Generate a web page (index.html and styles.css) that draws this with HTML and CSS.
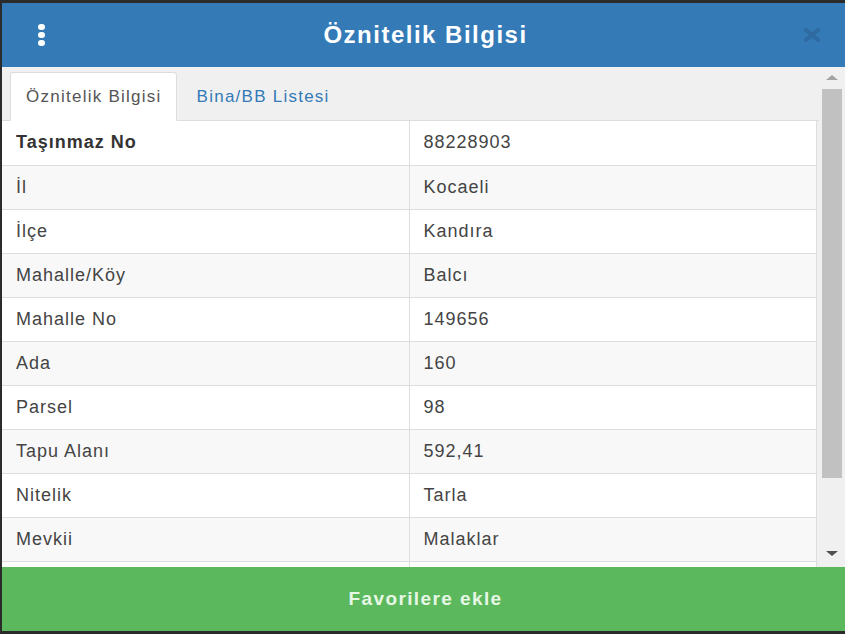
FILE: index.html
```html
<!DOCTYPE html>
<html lang="tr">
<head>
<meta charset="utf-8">
<title>Öznitelik Bilgisi</title>
<link rel="stylesheet" href="styles.css">
</head>
<body>
<div class="modal">
  <header class="modal-header">
    <span class="menu-dots"><i></i><i></i><i></i></span>
    <h1 class="title">Öznitelik Bilgisi</h1>
    <svg class="close" width="18" height="14" viewBox="0 0 18 14"><path d="M3 2 L15 12 M15 2 L3 12" stroke="#2f6aa0" stroke-width="4" stroke-linecap="round"/></svg>
  </header>
  <div class="modal-body">
    <div class="content">
      <ul class="tabs">
        <li class="tab active">Öznitelik Bilgisi</li>
        <li class="tab">Bina/BB Listesi</li>
      </ul>
      <table class="attr-table">
        <tr><td class="key strong">Taşınmaz No</td><td>88228903</td></tr>
        <tr><td class="key">İl</td><td>Kocaeli</td></tr>
        <tr><td class="key">İlçe</td><td>Kandıra</td></tr>
        <tr><td class="key">Mahalle/Köy</td><td>Balcı</td></tr>
        <tr><td class="key">Mahalle No</td><td>149656</td></tr>
        <tr><td class="key">Ada</td><td>160</td></tr>
        <tr><td class="key">Parsel</td><td>98</td></tr>
        <tr><td class="key">Tapu Alanı</td><td>592,41</td></tr>
        <tr><td class="key">Nitelik</td><td>Tarla</td></tr>
        <tr><td class="key">Mevkii</td><td>Malaklar</td></tr>
        <tr><td class="key"></td><td></td></tr>
      </table>
    </div>
    <div class="scrollbar">
      <span class="arrow up"></span>
      <span class="thumb"></span>
      <span class="arrow down"></span>
    </div>
  </div>
  <footer class="modal-footer">Favorilere ekle</footer>
</div>
</body>
</html>
```
FILE: styles.css
```css
html, body {
  margin: 0;
  padding: 0;
}
body {
  background: #2b2b2b;
  font-family: "Liberation Sans", Arial, sans-serif;
  width: 845px;
  height: 634px;
  overflow: hidden;
}
.modal {
  margin: 3px 0 0 2px;
  width: 843px;
  height: 628px;
  display: flex;
  flex-direction: column;
  background: #f0f0f0;
}
.modal-header {
  height: 64px;
  flex: none;
  background: #337ab7;
  display: flex;
  align-items: center;
  padding: 0 24px 0 36px;
  box-sizing: border-box;
}
.menu-dots {
  display: flex;
  flex-direction: column;
  gap: 2px;
  width: 8px;
}
.menu-dots i {
  display: block;
  width: 7px;
  height: 6px;
  border-radius: 3px;
  background: #fff;
}
.title {
  flex: 1;
  margin: 0;
  text-align: center;
  color: #fff;
  font-size: 24px;
  font-weight: bold;
  letter-spacing: 1.5px;
  padding-left: 2px;
}
.close {
  flex: none;
}
.modal-body {
  flex: 1;
  display: flex;
  min-height: 0;
  overflow: hidden;
}
.content {
  flex: 1;
  min-width: 0;
  overflow: hidden;
  display: flex;
  flex-direction: column;
}
.tabs {
  list-style: none;
  margin: 0;
  padding: 5px 0 0 8px;
  display: flex;
  border-bottom: 1px solid #ddd;
  height: 54px;
  box-sizing: border-box;
}
.tab {
  height: 49px;
  box-sizing: border-box;
  padding: 0 15px 0 19px;
  display: flex;
  align-items: center;
  font-size: 17px;
  letter-spacing: 1.25px;
  color: #337ab7;
  border: 1px solid transparent;
  border-radius: 3px 3px 0 0;
  margin-bottom: -1px;
}
.tab.active {
  background: #fff;
  color: #555;
  border-color: #ddd;
  border-bottom-color: #fff;
  padding: 0 14px 0 15px;
}
.attr-table {
  width: 815px;
  border-collapse: collapse;
  background: #fff;
  border-right: 1px solid #ddd;
}
.attr-table td {
  height: 44px;
  padding: 0 14px;
  font-size: 18px;
  letter-spacing: 1px;
  color: #444;
  border-bottom: 1px solid #ddd;
  box-sizing: border-box;
  vertical-align: middle;
}
.attr-table td.key {
  width: 407px;
  border-right: 1px solid #ddd;
}
.attr-table td.strong {
  font-weight: bold;
  color: #333;
}
.attr-table tr:nth-child(even) td {
  background: #f8f8f8;
}
.scrollbar {
  width: 26px;
  flex: none;
  background: #f0f0f0;
  display: flex;
  flex-direction: column;
  align-items: center;
}
.arrow {
  display: block;
  width: 0;
  height: 0;
  border-left: 6px solid transparent;
  border-right: 6px solid transparent;
}
.arrow.up {
  margin-top: 8px;
  border-bottom: 5px solid #a3a3a3;
}
.thumb {
  display: block;
  width: 20px;
  height: 389px;
  margin-top: 9px;
  background: #c1c1c1;
}
.arrow.down {
  margin-top: auto;
  margin-bottom: 11px;
  border-top: 5px solid #505050;
}
.modal-footer {
  height: 64px;
  flex: none;
  background: #5cb85c;
  color: #e6f7e6;
  font-weight: bold;
  font-size: 19px;
  letter-spacing: 1.4px;
  display: flex;
  align-items: center;
  justify-content: center;
  padding-left: 4px;
}
```
